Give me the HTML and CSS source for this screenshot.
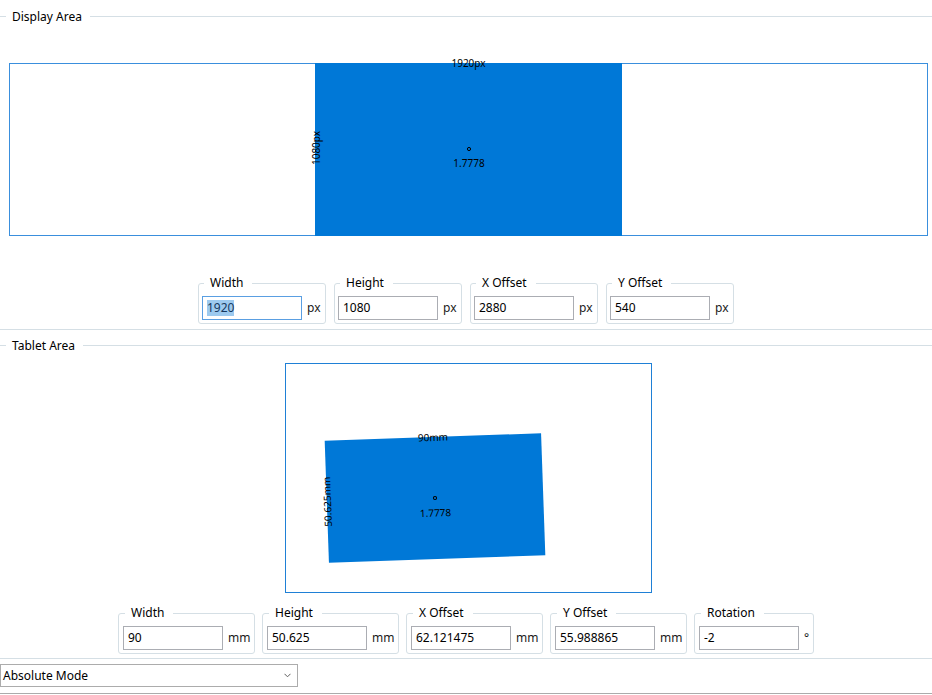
FILE: index.html
```html
<!DOCTYPE html>
<html>
<head>
<meta charset="utf-8">
<link rel="stylesheet" href="styles.css">
</head>
<body>
<section class="group group-display">
  <div class="group-head"><span class="stub"></span><span class="group-title">Display Area</span><span class="rule"></span></div>
  <div class="canvas-row canvas-row-display">
    <svg class="canvas canvas-display" viewBox="1 1 917 171">
      <rect class="area-fill" x="306" y="0" width="307" height="173"/>
      <text class="area-label" x="459.5" y="0">1920px</text>
      <text class="area-label" transform="translate(307 85) rotate(-90)">1080px</text>
      <circle class="area-dot" cx="460" cy="86" r="1.6"/>
      <text class="area-label" x="460" y="100">1.7778</text>
    </svg>
  </div>
  <div class="fields fields-display">
    <fieldset class="field"><legend>Width</legend><div class="field-body"><div class="tb tb-focus"><span class="sel">1920</span></div><span class="unit">px</span></div></fieldset>
    <fieldset class="field"><legend>Height</legend><div class="field-body"><div class="tb">1080</div><span class="unit">px</span></div></fieldset>
    <fieldset class="field"><legend>X Offset</legend><div class="field-body"><div class="tb">2880</div><span class="unit">px</span></div></fieldset>
    <fieldset class="field"><legend>Y Offset</legend><div class="field-body"><div class="tb">540</div><span class="unit">px</span></div></fieldset>
  </div>
</section>
<section class="group group-tablet">
  <div class="group-head"><span class="stub"></span><span class="group-title">Tablet Area</span><span class="rule"></span></div>
  <div class="canvas-row canvas-row-tablet">
    <svg class="canvas" width="367" height="230" viewBox="0 0 367 230">
      <rect class="frame" x="0.5" y="0.5" width="366" height="229"/>
      <g transform="translate(150 135) rotate(-2)">
        <rect class="area-fill" x="-108.25" y="-61" width="216.5" height="122"/>
        <text class="area-label" x="0" y="-61">90mm</text>
        <text class="area-label" transform="translate(-108 0) rotate(-90)">50.625mm</text>
        <circle class="area-dot" cx="0" cy="0" r="1.6"/>
        <text class="area-label" x="0" y="14.5">1.7778</text>
      </g>
    </svg>
  </div>
  <div class="fields fields-tablet">
    <fieldset class="field"><legend>Width</legend><div class="field-body"><div class="tb">90</div><span class="unit">mm</span></div></fieldset>
    <fieldset class="field"><legend>Height</legend><div class="field-body"><div class="tb">50.625</div><span class="unit">mm</span></div></fieldset>
    <fieldset class="field"><legend>X Offset</legend><div class="field-body"><div class="tb">62.121475</div><span class="unit">mm</span></div></fieldset>
    <fieldset class="field"><legend>Y Offset</legend><div class="field-body"><div class="tb">55.988865</div><span class="unit">mm</span></div></fieldset>
    <fieldset class="field field-rotation"><legend>Rotation</legend><div class="field-body"><div class="tb">-2</div><span class="unit">°</span></div></fieldset>
  </div>
</section>
<div class="combo">
  <span class="combo-text">Absolute Mode</span>
  <svg class="chev" width="7" height="5" viewBox="0 0 7 5"><polyline points="0.5,0.8 3.5,3.8 6.5,0.8"/></svg>
</div>
<div class="bottom-rule"></div>
</body>
</html>
```
FILE: styles.css
```css
* { box-sizing: border-box; }
html, body { margin: 0; padding: 0; }
body {
  width: 932px;
  height: 695px;
  overflow: hidden;
  background: #fff;
  color: #000;
  font-family: "Noto Sans", "Open Sans", sans-serif;
  font-size: 12px;
}

.group { border-bottom: 1px solid #d5dfe5; }
.group-display { padding-top: 8px; padding-bottom: 5px; }
.group-tablet { padding-top: 7px; padding-bottom: 4px; }

.group-head { display: flex; align-items: center; height: 17px; }
.stub { width: 6px; height: 1px; background: #d5dfe5; }
.group-title { padding: 0 8px 0 6px; line-height: 17px; white-space: nowrap; }
.rule { flex: 1; height: 1px; background: #d5dfe5; }

.canvas-row { display: flex; justify-content: center; padding-left: 5px; }
.canvas-row-display { margin-top: 38px; }
.canvas-row-tablet { margin-top: 9px; }
.canvas { display: block; overflow: visible; }
.canvas-display {
  width: 919px;
  height: 173px;
  border: 1px solid #3a8fdd;
}

.frame { fill: none; stroke: #1f80d6; }
.area-fill { fill: #0078d7; }
.area-label {
  font-family: "Noto Sans", sans-serif;
  font-size: 10px;
  fill: #000;
  text-anchor: middle;
  dominant-baseline: central;
}
.area-dot { fill: none; stroke: #000; stroke-width: 1; }

.fields { display: flex; justify-content: center; }
.fields-display { margin-top: 40px; gap: 8px; }
.fields-tablet { margin-top: 13px; gap: 7px; }

.field {
  margin: 0;
  min-width: 0;
  border: 1px solid #d5dfe5;
  border-radius: 3px;
  padding: 6px 0 3px 3px;
}
.fields-display .field { width: 128px; }
.fields-tablet .field { width: 137px; padding-left: 4px; }
.fields-tablet .field-rotation { width: 120px; }

.field legend {
  margin-left: 2px;
  padding: 0 9px 0 6px;
  line-height: 14px;
  white-space: nowrap;
}

.field-body { display: flex; align-items: baseline; }
.tb {
  width: 100px;
  height: 24px;
  border: 1px solid #abadb3;
  padding-left: 4px;
  line-height: 22px;
  white-space: nowrap;
  overflow: hidden;
}
.tb-focus { border-color: #5a9fe2; }
.sel { background: #9dcaef; color: #16385e; line-height: 16px; display: inline-block; }
.unit { margin-left: 5px; color: #1a1a1a; }

.combo {
  margin-top: 5px;
  width: 298px;
  height: 23px;
  border: 1px solid #acacac;
  background: #fff;
  display: flex;
  align-items: center;
  justify-content: space-between;
  padding: 0 6px 0 2px;
}
.combo-text { line-height: 21px; }
.chev { display: block; }
.chev polyline { fill: none; stroke: #606060; stroke-width: 1; }

.bottom-rule { margin-top: 6px; border-top: 1px solid #ababab; }
```
